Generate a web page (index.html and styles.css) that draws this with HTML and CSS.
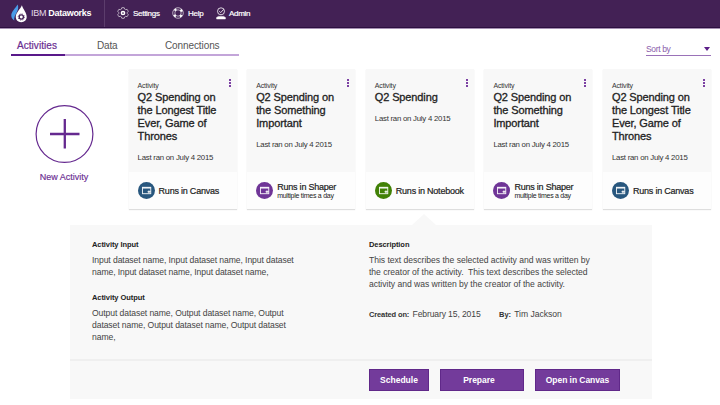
FILE: index.html
```html
<!DOCTYPE html>
<html lang="en">
<head>
<meta charset="utf-8">
<title>IBM Dataworks</title>
<link rel="stylesheet" href="styles.css">
</head>
<body>
<svg class="defs" width="0" height="0" aria-hidden="true">
  <symbol id="window" viewBox="0 0 16 16">
    <rect x="4.2" y="5" width="7.8" height="6" fill="none" stroke="#fff" stroke-width=".9" opacity=".9"/>
    <path d="M4.200 5.600h7.800" stroke="#fff" stroke-width="1.200"/>
    <path d="M9 9.200h3M10.300 8v2.500" stroke="#fff" stroke-width="1"/>
  </symbol>
</svg>
<header class="bar">
  <div class="brand">
    <svg class="logo" width="18" height="19" viewBox="0 0 18 19">
      <path d="M6.700.5C4.500 4 .3 7.800 .3 11.500c0 2 .9 3.600 2.900 4.900C2.600 10.500 9 7 6.700.5z" fill="#4a9be8"/>
      <path d="M10.900 1.300C9.300 5.500 4.800 8.500 4.800 13c0 3 2.300 5.200 5.400 5.200s5.500-2.200 5.500-5.200c0-4.500-3.300-7-4.800-11.700z" fill="#fff"/>
      <circle cx="10.300" cy="13" r="2.100" fill="none" stroke="#432155" stroke-width="1.300"/>
      <circle cx="10.300" cy="13" r="3.100" fill="none" stroke="#432155" stroke-width=".8" stroke-dasharray="1.200 1.235"/>
    </svg>
    <span class="name">IBM <b>Dataworks</b></span>
  </div>
  <nav class="links">
    <a class="settings"><svg width="12" height="12" viewBox="0 0 12 12" fill="none" stroke="#fff">
      <path d="M4.800.7h2.400l.4 1.400 1.100.6 1.400-.4 1.200 2-1 1.100v1.200l1 1.100-1.200 2-1.400-.4-1.100.6-.4 1.400H4.800l-.4-1.400-1.100-.6-1.400.4-1.200-2 1-1.100V5.400l-1-1.100 1.200-2 1.400.4 1.100-.6z" stroke-width=".7" opacity=".85"/>
      <circle cx="6" cy="6" r="1.600" stroke-width="1.500"/></svg><span>Settings</span></a>
    <a class="help"><svg width="12" height="12" viewBox="0 0 12 12" fill="none" stroke="#fff">
      <circle cx="6" cy="6" r="5.300" stroke-width=".6"/><circle cx="6" cy="6" r="3.200" stroke-width=".6"/>
      <circle cx="6" cy="6" r="4.200" stroke-width="2" stroke-dasharray="2.200 4.397" stroke-dashoffset="-2.200"/></svg><span>Help</span></a>
    <a class="admin"><svg width="12" height="13" viewBox="0 0 12 13" fill="none" stroke="#fff">
      <circle cx="6" cy="4.300" r="3.500" stroke-width=".8"/><path d="M4.300 4.200l1.400 1.400 3-3.300" stroke-width=".8"/>
      <path d="M1.600 12v-1.600l1.800-1h5.200l1.800 1V12z" fill="#fff" stroke-width=".5"/></svg><span>Admin</span></a>
  </nav>
</header>
<section class="toolbar">
  <nav class="tabs">
    <a class="tab active"><span>Activities</span></a>
    <a class="tab data"><span>Data</span></a>
    <a class="tab conn"><span>Connections</span></a>
  </nav>
  <div class="sort"><span>Sort by</span><i class="caret"></i></div>
</section>
<main>
  <section class="row">
    <div class="new">
      <svg width="60" height="60" viewBox="0 0 60 60" fill="none" stroke="#65298f">
        <circle cx="30.500" cy="30" r="28.400" stroke-width="1.200"/>
        <path d="M16 30h29.500M30.800 15v29.500" stroke-width="2.300"/></svg>
      <span>New Activity</span>
    </div>
    <article class="card">
      <div class="body"><i class="dots"></i><p class="kind">Activity</p>
        <h2>Q2 Spending on<br>the Longest Title<br>Ever, Game of<br>Thrones</h2><p class="ran">Last ran on July 4 2015</p></div>
      <div class="foot"><svg class="badge blue"><use href="#window"/></svg><p class="runs">Runs in Canvas</p></div>
    </article>
    <article class="card">
      <div class="body"><i class="dots"></i><p class="kind">Activity</p>
        <h2>Q2 Spending on<br>the Something<br>Important</h2><p class="ran">Last ran on July 4 2015</p></div>
      <div class="foot"><svg class="badge violet"><use href="#window"/></svg><p class="runs">Runs in Shaper<small>multiple times a day</small></p></div>
    </article>
    <article class="card">
      <div class="body"><i class="dots"></i><p class="kind">Activity</p>
        <h2>Q2 Spending</h2><p class="ran">Last ran on July 4 2015</p></div>
      <div class="foot"><svg class="badge green"><use href="#window"/></svg><p class="runs">Runs in Notebook</p></div>
    </article>
    <article class="card">
      <div class="body"><i class="dots"></i><p class="kind">Activity</p>
        <h2>Q2 Spending on<br>the Something<br>Important</h2><p class="ran">Last ran on July 4 2015</p></div>
      <div class="foot"><svg class="badge violet"><use href="#window"/></svg><p class="runs">Runs in Shaper<small>multiple times a day</small></p></div>
    </article>
    <article class="card">
      <div class="body"><i class="dots"></i><p class="kind">Activity</p>
        <h2>Q2 Spending on<br>the Longest Title<br>Ever, Game of<br>Thrones</h2><p class="ran">Last ran on July 4 2015</p></div>
      <div class="foot"><svg class="badge blue"><use href="#window"/></svg><p class="runs">Runs in Canvas</p></div>
    </article>
  </section>
  <section class="panel">
    <div class="details">
      <div class="col sets">
        <h3>Activity Input</h3>
        <p>Input dataset name, Input dataset name, Input dataset<br>name, Input dataset name, Input dataset name,</p>
        <h3 class="second">Activity Output</h3>
        <p>Output dataset name, Output dataset name, Output<br>dataset name, Output dataset name, Output dataset<br>name,</p>
      </div>
      <div class="col">
        <h3>Description</h3>
        <p>This text describes the selected activity and was written by<br>the creator of the activity.&nbsp; This text describes the selected<br>activity and was written by the creator of the activity.</p>
        <div class="meta"><span class="created"><b>Created on:</b> February 15, 2015</span><span class="by"><b>By:</b> Tim Jackson</span></div>
      </div>
    </div>
    <div class="actions">
      <button class="b1">Schedule</button><button class="b2">Prepare</button><button class="b3">Open in Canvas</button>
    </div>
  </section>
</main>
</body>
</html>
```

FILE: styles.css
```css
* { box-sizing: border-box; }
body { margin: 0; width: 720px; height: 405px; overflow: hidden; background: #fff; color: #333; font-family: "Liberation Sans", Arial, sans-serif; white-space: nowrap; }
h2, h3, p { margin: 0; }
.defs { position: absolute; }

.bar { display: flex; height: 28px; background: #432155; border-bottom: 1px solid #2d0f41; box-shadow: 0 1px 0 #a58fb2; color: #fff; }
.brand { display: flex; align-items: center; width: 105px; padding-left: 11px; border-right: 1px solid #5c3d6c; }
.logo { margin-top: -1px; }
.name { margin-left: 2px; margin-top: -1px; font-size: 9px; letter-spacing: -.29px; color: #e4d9ea; }
.name b { color: #fff; }
.links { display: flex; align-items: center; padding: 0 0 1px 12px; font-size: 8px; letter-spacing: -.28px; -webkit-text-stroke: .2px #fff; }
.links a { display: flex; align-items: center; gap: 4px; }
.settings { width: 55px; }
.help { width: 43px; }
.links .admin { gap: 2px; }

.toolbar { display: flex; justify-content: space-between; height: 41px; padding: 7px 9px 0 11px; }
.tabs { display: flex; height: 22px; font-size: 10px; color: #555; }
.tab { height: 21px; padding-top: 4px; border-bottom: 2px solid #c3a5d9; line-height: 13px; }
.active { width: 54px; padding-left: 6px; color: #6a2d91; border-color: #59198a; letter-spacing: .05px; -webkit-text-stroke: .2px #6a2d91; }
.data { width: 68px; padding-left: 32px; letter-spacing: -.2px; }
.conn { width: 106px; padding-left: 32px; letter-spacing: -.1px; }
.sort { display: flex; justify-content: space-between; align-items: center; width: 65px; height: 14px; margin-top: 7px; border-bottom: 1px solid #9a72b8; color: #8a5cab; font-size: 8.500px; letter-spacing: -.35px; }
.caret { margin: 1px 1px 0 0; border: 3px solid transparent; border-top: 4px solid #5b1e88; border-bottom: 0; }

.row { display: flex; gap: 10.600px; height: 140px; padding-left: 34px; }
.new { display: flex; flex-direction: column; align-items: center; width: 60px; margin-right: 24px; padding-top: 35px; color: #6a2d91; font-size: 9px; }
.new span { margin-top: 8px; line-height: 11px; -webkit-text-stroke: .15px #6a2d91; }
.card { width: 108px; height: 140px; background: #fdfdfd; box-shadow: 0 1px 1px rgba(0,0,0,.13); }
.body { position: relative; height: 103px; padding: 11px 0 0 9px; background: #f8f8f8; }
.dots { position: absolute; top: 10px; right: 6px; width: 2px; height: 8px; background: repeating-linear-gradient(#7c41a3 0 2px, transparent 2px 3px); }
.kind { font-size: 7px; line-height: 11px; letter-spacing: -.15px; }
h2 { font-size: 11px; font-weight: 400; line-height: 13px; letter-spacing: -.12px; color: #222; -webkit-text-stroke: .3px #222; }
.ran { margin-top: 9px; font-size: 7.800px; line-height: 11px; letter-spacing: -.24px; }
.foot { display: flex; align-items: center; height: 37px; padding-left: 9px; gap: 4px; }
.badge { width: 17px; height: 17px; border-radius: 50%; }
.blue { background: #28577e; }
.violet { background: #6f3597; }
.green { background: #418106; }
.runs { font-size: 9px; line-height: 10px; letter-spacing: -.22px; color: #222; -webkit-text-stroke: .2px #222; }
.runs small { display: block; font-size: 7px; line-height: 7px; letter-spacing: -.27px; -webkit-text-stroke: 0; }

.panel { position: relative; width: 582px; height: 174px; margin: 16px 0 0 70px; background: #f8f8f8; }
.panel::before { content: ""; position: absolute; left: 342px; top: -11px; border: 12px solid transparent; border-top: 0; border-bottom: 11px solid #f8f8f8; }
.details { display: flex; height: 136px; padding: 14px 0 0 22px; border-bottom: 2px solid #efefef; }
.col { width: 277px; font-size: 8.600px; line-height: 12px; letter-spacing: -.03px; color: #444; }
.sets { letter-spacing: -.09px; }
h3 { margin-bottom: 4px; font-size: 7.500px; line-height: 11px; letter-spacing: -.08px; color: #222; }
.second { margin-top: 14px; }
.meta { display: flex; margin-top: 18px; }
.meta b { font-size: 7.500px; color: #333; }
.created { width: 130px; letter-spacing: -.13px; }
.created b { margin-right: 1px; }
.by { letter-spacing: -.03px; }
.by b { margin-right: 1px; }
.actions { display: flex; height: 38px; padding: 8px 0 0 299px; }
button { height: 22px; padding: 0; border: 1px solid #602889; background: #733b9b; color: #fff; font: bold 8.500px "Liberation Sans", Arial, sans-serif; }
.b1 { width: 60px; margin-right: 11px; }
.b2 { width: 84px; margin-right: 11px; padding-right: 6px; }
.b3 { width: 85px; letter-spacing: -.06px; }
```
